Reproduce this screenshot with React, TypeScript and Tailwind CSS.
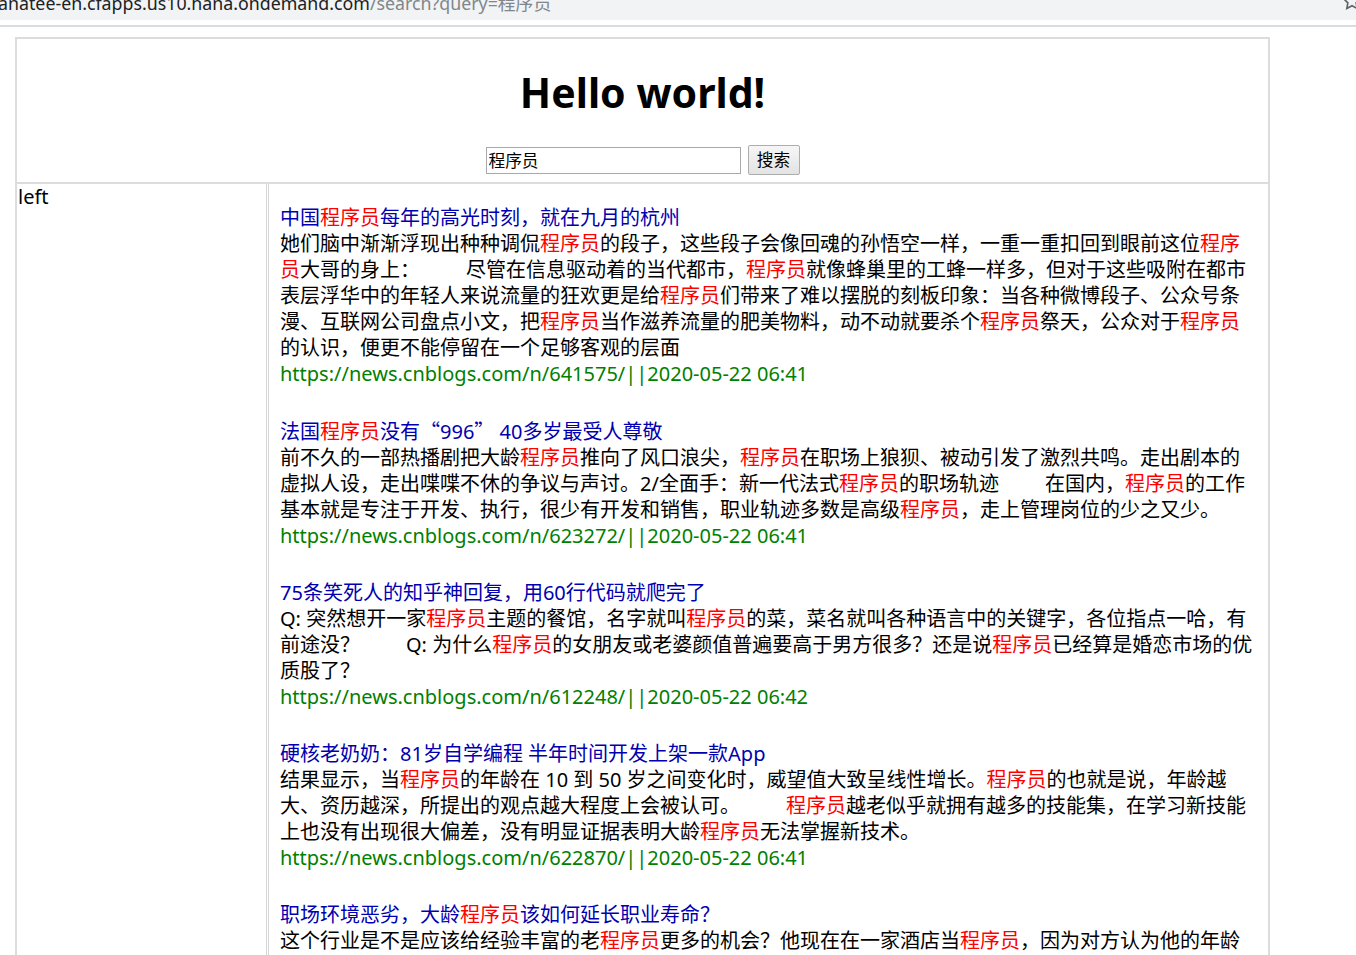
import React from 'react';

const KW = '程序员';

type Item = { title: string; body: string; url: string };

// "\t" marks the wide whitespace run that sits inside some snippets
const items: Item[] = [
  {
    title: '中国程序员每年的高光时刻，就在九月的杭州',
    body: '她们脑中渐渐浮现出种种调侃程序员的段子，这些段子会像回魂的孙悟空一样，一重一重扣回到眼前这位程序员大哥的身上：\t尽管在信息驱动着的当代都市，程序员就像蜂巢里的工蜂一样多，但对于这些吸附在都市表层浮华中的年轻人来说流量的狂欢更是给程序员们带来了难以摆脱的刻板印象：当各种微博段子、公众号条漫、互联网公司盘点小文，把程序员当作滋养流量的肥美物料，动不动就要杀个程序员祭天，公众对于程序员的认识，便更不能停留在一个足够客观的层面',
    url: 'https://news.cnblogs.com/n/641575/||2020-05-22 06:41',
  },
  {
    title: '法国程序员没有“996” 40多岁最受人尊敬',
    body: '前不久的一部热播剧把大龄程序员推向了风口浪尖，程序员在职场上狼狈、被动引发了激烈共鸣。走出剧本的虚拟人设，走出喋喋不休的争议与声讨。2/全面手：新一代法式程序员的职场轨迹\t在国内，程序员的工作基本就是专注于开发、执行，很少有开发和销售，职业轨迹多数是高级程序员，走上管理岗位的少之又少。',
    url: 'https://news.cnblogs.com/n/623272/||2020-05-22 06:41',
  },
  {
    title: '75条笑死人的知乎神回复，用60行代码就爬完了',
    body: 'Q: 突然想开一家程序员主题的餐馆，名字就叫程序员的菜，菜名就叫各种语言中的关键字，各位指点一哈，有前途没？\tQ: 为什么程序员的女朋友或老婆颜值普遍要高于男方很多？还是说程序员已经算是婚恋市场的优质股了？',
    url: 'https://news.cnblogs.com/n/612248/||2020-05-22 06:42',
  },
  {
    title: '硬核老奶奶：81岁自学编程 半年时间开发上架一款App',
    body: '结果显示，当程序员的年龄在 10 到 50 岁之间变化时，威望值大致呈线性增长。程序员的也就是说，年龄越大、资历越深，所提出的观点越大程度上会被认可。\t程序员越老似乎就拥有越多的技能集，在学习新技能上也没有出现很大偏差，没有明显证据表明大龄程序员无法掌握新技术。',
    url: 'https://news.cnblogs.com/n/622870/||2020-05-22 06:41',
  },
  {
    title: '职场环境恶劣，大龄程序员该如何延长职业寿命？',
    body: '这个行业是不是应该给经验丰富的老程序员更多的机会？他现在在一家酒店当程序员，因为对方认为他的年龄和经验正是他们所需要的，而不是一种负担。',
    url: 'https://news.cnblogs.com/n/621958/||2020-05-22 06:41',
  },
];

// curly quotes render full width in the original, so give them the CJK face
function Quotes({ text }: { text: string }) {
  return (
    <>
      {text.split(/([“”])/).map((p, i) =>
        p === '“' || p === '”' ? (
          <span key={i} className="font-['Noto_Sans_CJK_SC',sans-serif]">
            {p}
          </span>
        ) : (
          <React.Fragment key={i}>{p}</React.Fragment>
        )
      )}
    </>
  );
}

function Highlighted({ text }: { text: string }) {
  const gaps = text.split('\t');
  return (
    <>
      {gaps.map((chunk, gi) => (
        <React.Fragment key={gi}>
          {gi > 0 && <span className="inline-block w-[46px]" />}
          {chunk.split(KW).map((part, i) => (
            <React.Fragment key={i}>
              {i > 0 && <span className="text-[#ff0000]">{KW}</span>}
              <Quotes text={part} />
            </React.Fragment>
          ))}
        </React.Fragment>
      ))}
    </>
  );
}

function ResultItem({ item }: { item: Item }) {
  return (
    <div className="mb-[31px]">
      <div className="text-[#0000b0]">
        <Highlighted text={item.title} />
      </div>
      <div className="text-black">
        <Highlighted text={item.body} />
      </div>
      <div className="text-[#008000]">{item.url}</div>
    </div>
  );
}

export default function App() {
  return (
    <div className="min-h-screen bg-white font-['Noto_Sans','Noto_Sans_CJK_SC',sans-serif] overflow-hidden">
      {/* Browser address bar, cut off at the top */}
      <div className="relative h-5 bg-[#f1f3f4] overflow-hidden">
        <div className="-mt-[9px] -ml-[2px] whitespace-nowrap text-[17.8px] leading-[24px]">
          <span className="text-[#202124]">anatee-en.cfapps.us10.hana.ondemand.com</span>
          <span className="text-[#80868b]">/search?query=程序员</span>
        </div>
        <svg
          className="absolute left-[1342px] -top-[9px]"
          width="20"
          height="20"
          viewBox="0 0 24 24"
          fill="none"
          stroke="#5f6368"
          strokeWidth="2"
        >
          <path d="M12 2l3.09 6.26L22 9.27l-5 4.87 1.18 6.88L12 17.77l-6.18 3.25L7 14.14 2 9.27l6.91-1.01L12 2z" />
        </svg>
      </div>
      <div className="h-[5px]" />
      <div className="h-[2px] bg-[#dadce0]" />
      <div className="h-[10px]" />

      {/* Page table */}
      <div className="ml-[15px] w-[1255px] border-2 border-b-0 border-[#dcdcdc] text-[20px] leading-[26px] text-black">
        <div className="border-b-2 border-[#dcdcdc] pt-[27px] pb-[7px] flex flex-col items-center">
          <h1 className="h-[53px] text-[41px] leading-[53px] font-bold">Hello world!</h1>
          <div className="mt-[26px] h-[30px] flex items-center gap-[7px]">
            <input
              defaultValue="程序员"
              className="w-[255px] h-[27px] border border-[#a9a9a9] px-[2px] text-[16.7px] leading-[25px] text-black outline-none"
            />
            <button className="w-[52px] h-[30px] border border-[#adadad] rounded-[2px] bg-gradient-to-b from-[#f6f6f6] to-[#e3e3e3] text-[16.7px] leading-[28px] text-black">
              搜索
            </button>
          </div>
        </div>

        <div className="flex">
          <div className="w-[249px] shrink-0 pl-px">left</div>
          <div className="w-[3px] shrink-0 border-l border-r border-[#d6d6d6]" />
          <div className="w-[999px] shrink-0 pt-[21px] pl-[11px] pr-[10px]">
            {items.map((item, i) => (
              <ResultItem key={i} item={item} />
            ))}
          </div>
        </div>
      </div>
    </div>
  );
}
